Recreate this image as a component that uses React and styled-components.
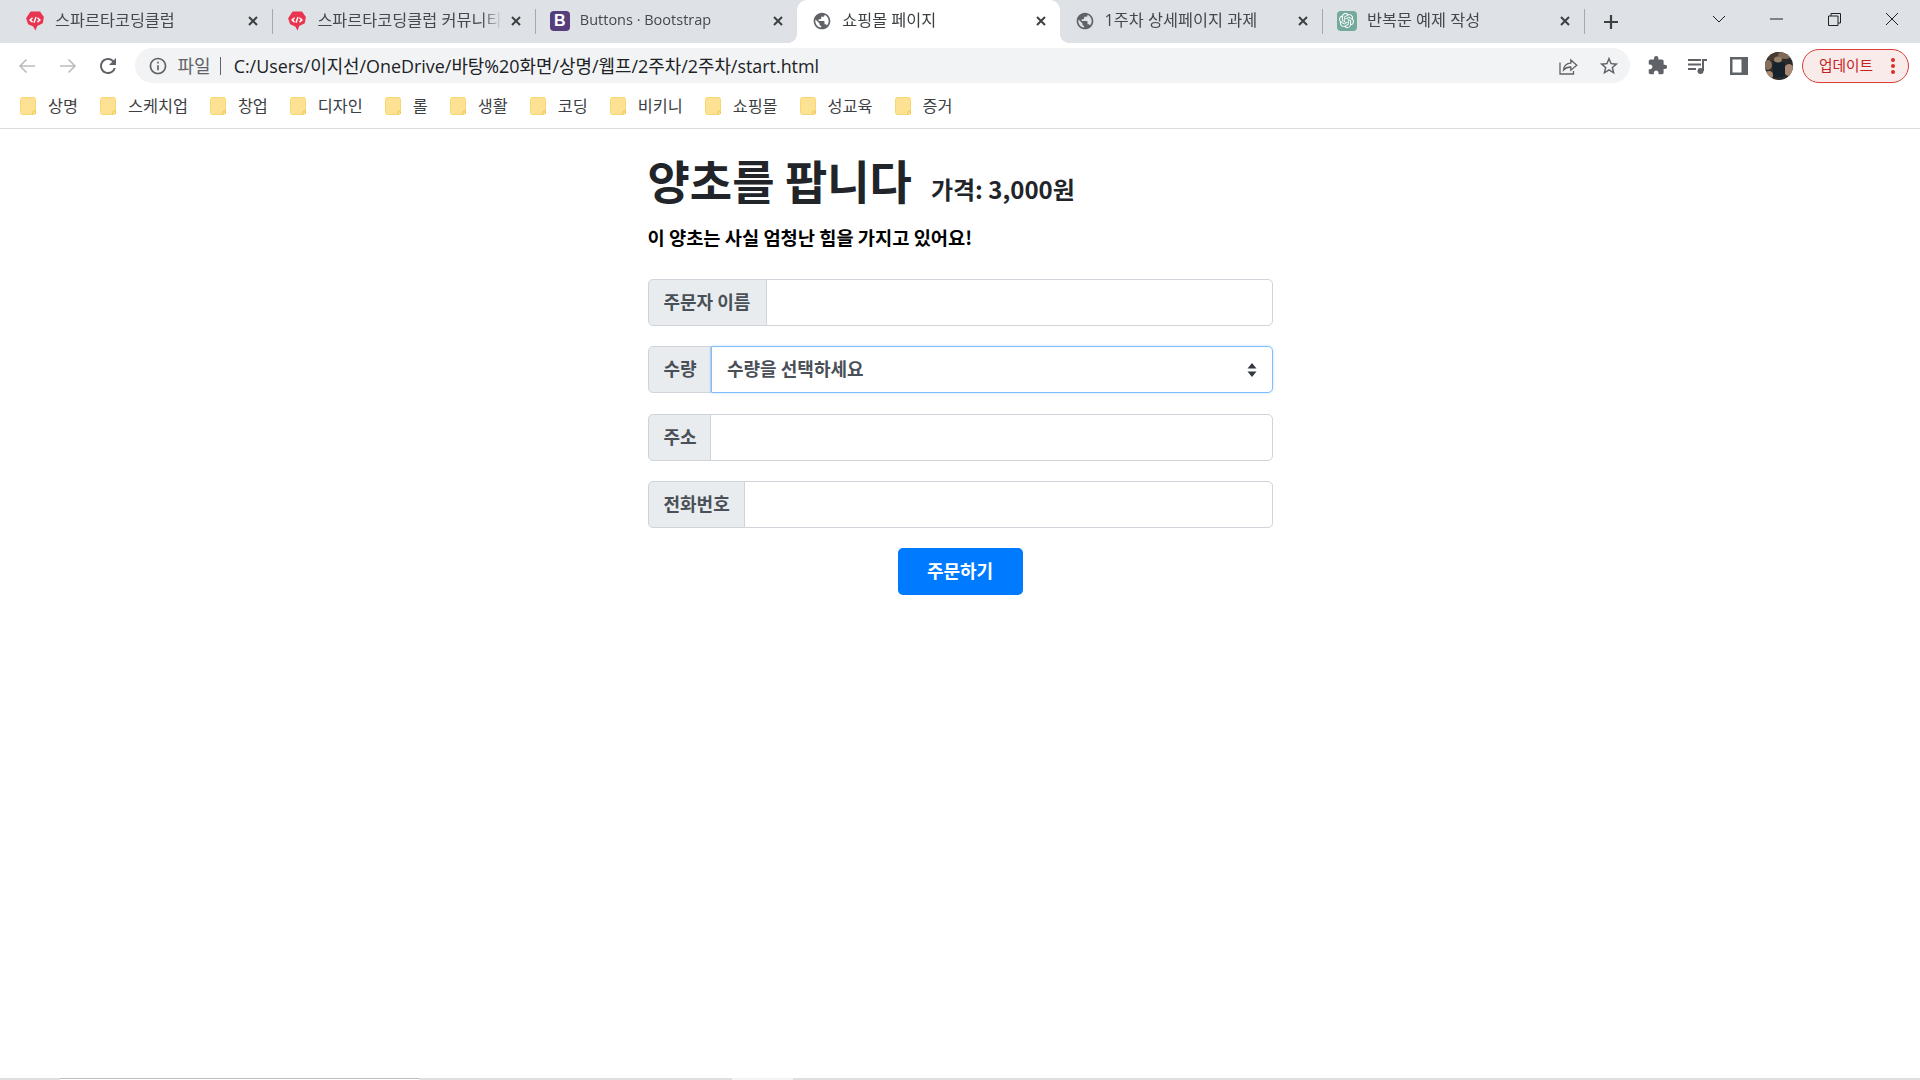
import React from 'react';
import styled, { createGlobalStyle } from 'styled-components';
import { MdExtension, MdInfoOutline, MdPublic, MdRefresh, MdStarBorder } from 'react-icons/md';
import { SiOpenai } from 'react-icons/si';

const GlobalStyle = createGlobalStyle`
  html, body {
    margin: 0;
    padding: 0;
    background: #fff;
  }
  * {
    box-sizing: border-box;
  }
`;

const uiFont = `"Open Sans", "Noto Sans CJK KR", sans-serif`;
const pageFont = `"Noto Sans CJK KR", "Noto Sans", sans-serif`;

const Page = styled.div`
  width: 1920px;
  height: 1080px;
  display: flex;
  flex-direction: column;
  overflow: hidden;
  font-family: ${uiFont};
`;

/* tab strip */
const TabStrip = styled.div`
  height: 43px;
  flex: none;
  display: flex;
  padding-left: 10px;
  background: #dee1e6;
`;

const Tab = styled.div`
  position: relative;
  width: 262.4px;
  height: 43px;
  flex: none;
  display: flex;
  align-items: center;
  padding: 0 13px 2px 15px;
  color: ${(p) => (p.$active ? '#3c4043' : '#45494e')};
  background: ${(p) => (p.$active ? '#fff' : 'transparent')};
  border-radius: 10px 10px 0 0;

  ${(p) =>
    p.$sep &&
    `&::after {
      content: '';
      position: absolute;
      right: -1px;
      top: 9px;
      width: 1px;
      height: 25px;
      background: #a5a8ad;
    }`}

  ${(p) =>
    p.$active &&
    `&::before, &::after {
      content: '';
      position: absolute;
      bottom: 0;
      width: 10px;
      height: 10px;
    }
    &::before {
      left: -10px;
      background: radial-gradient(circle at 0 0, transparent 10px, #fff 10.5px);
    }
    &::after {
      right: -10px;
      background: radial-gradient(circle at 100% 0, transparent 10px, #fff 10.5px);
    }`}
`;

const Favicon = styled.span`
  width: 20px;
  height: 20px;
  flex: none;
  display: flex;
  align-items: center;
  justify-content: center;
  color: #5f6368;
`;

const BootstrapMark = styled.span`
  width: 20px;
  height: 20px;
  display: flex;
  align-items: center;
  justify-content: center;
  border-radius: 4px;
  background: #563d7c;
  color: #fff;
  font-family: "Liberation Sans", sans-serif;
  font-size: 16px;
  font-weight: 700;
`;

const OpenAiMark = styled.span`
  width: 20px;
  height: 20px;
  display: flex;
  align-items: center;
  justify-content: center;
  border-radius: 4px;
  background: #74aa9c;
  color: #fff;
`;

const TabTitle = styled.span`
  flex: 1;
  min-width: 0;
  margin: 0 8px 0 10px;
  padding-bottom: 3px;
  font-size: ${(p) => p.$size || 16.3}px;
  white-space: nowrap;
  overflow: hidden;
  mask-image: linear-gradient(to right, #000 calc(100% - 20px), transparent);
`;

const TabClose = styled.svg`
  width: 12px;
  height: 12px;
  flex: none;
  stroke: #3c4043;
  stroke-width: 2;
`;

const NewTab = styled.svg`
  width: 16px;
  height: 16px;
  margin: 1px 0 0 19px;
  align-self: center;
  stroke: #3c4043;
  stroke-width: 2.2;
`;

const WindowControls = styled.div`
  margin-left: auto;
  display: flex;
  align-items: center;
  height: 38px;
`;

const WindowButton = styled.div`
  width: ${(p) => p.$w}px;
  display: flex;
  justify-content: center;
  color: #202124;
`;

/* toolbar */
const Toolbar = styled.div`
  height: 48px;
  flex: none;
  display: flex;
  align-items: center;
  padding: 0 11px 3px 7px;
  background: #fff;
`;

const IconButton = styled.div`
  width: 40.5px;
  height: 34px;
  flex: none;
  display: flex;
  align-items: center;
  justify-content: center;
  color: ${(p) => (p.$muted ? '#b9bcbf' : '#5f6368')};
`;

const Omnibox = styled.div`
  flex: 1;
  height: 35px;
  margin: 0 8px 0 6px;
  display: flex;
  align-items: center;
  padding: 0 10px 0 13px;
  border-radius: 18px;
  background: #f1f3f4;
`;

const OriginChip = styled.span`
  margin-left: 10px;
  padding-bottom: 2px;
  font-size: 18px;
  color: #5f6368;
`;

const ChipDivider = styled.span`
  width: 1px;
  height: 18px;
  margin: 0 13px 0 9px;
  background: #5f6368;
`;

const Url = styled.span`
  flex: 1;
  padding-bottom: 2px;
  font-size: 17.9px;
  color: #202124;
  white-space: nowrap;
`;

const OmniActions = styled.div`
  display: flex;
  align-items: center;
  gap: 20px;
  color: #5f6368;
`;

const Avatar = styled.svg`
  width: 28px;
  height: 28px;
  flex: none;
  margin-left: 6px;
  border-radius: 50%;
`;

const UpdateButton = styled.div`
  width: 107px;
  height: 34px;
  flex: none;
  margin-left: 9px;
  display: flex;
  align-items: center;
  justify-content: space-between;
  padding: 0 13px 3px 16px;
  border: 1.5px solid #d5403a;
  border-radius: 17px;
  background: #f9ebe9;
  color: #c5221f;
  font-size: 14.7px;
`;

const Dots = styled.svg`
  width: 4px;
  height: 16px;
  margin-top: 3px;
  fill: #d93025;
`;

/* bookmarks */
const BookmarkBar = styled.div`
  height: 38px;
  flex: none;
  display: flex;
  align-items: flex-start;
  padding: 6px 0 0 20px;
  gap: 22px;
  border-bottom: 1px solid #dadce0;
  background: #fff;
`;

const Bookmark = styled.div`
  display: flex;
  align-items: center;
  gap: 12px;
  height: 18px;
  font-size: 16.3px;
  color: #3c4043;
`;

const BookmarkName = styled.span`
  padding-bottom: 3px;
`;

/* page content */
const Main = styled.main`
  flex: 1;
  width: 625px;
  margin: 0 auto;
  padding-top: 20px;
  font-family: ${pageFont};
`;

const Title = styled.h1`
  margin: 0;
  font-size: 46px;
  line-height: 60px;
  font-weight: 700;
  color: #212529;
  white-space: nowrap;
`;

const Price = styled.small`
  margin-left: 19px;
  font-size: 24px;
  font-weight: 700;
`;

const Lead = styled.p`
  margin: 4px 0 0;
  font-size: 18.7px;
  line-height: 28px;
  font-weight: 700;
  color: #000;
`;

const Form = styled.form`
  margin-top: 28px;
  display: flex;
  flex-direction: column;
  gap: 20.3px;
`;

const InputGroup = styled.div`
  position: relative;
  display: flex;
  height: 47px;
`;

const GroupLabel = styled.label`
  width: ${(p) => p.$w}px;
  flex: none;
  display: flex;
  align-items: center;
  padding: 0 0 3px 15px;
  border: 1px solid #ced4da;
  border-radius: 5px 0 0 5px;
  background: #e9ecef;
  color: #495057;
  font-size: 18px;
  font-weight: 700;
  white-space: nowrap;
`;

const TextInput = styled.input`
  flex: 1;
  min-width: 0;
  margin-left: -1px;
  border: 1px solid #ced4da;
  border-radius: 0 5px 5px 0;
  background: #fff;
  outline: none;
`;

const Select = styled.select`
  flex: 1;
  min-width: 0;
  padding: 0 0 4px 15px;
  appearance: none;
  border: 1px solid #80bdff;
  border-radius: 0 5px 5px 0;
  background: #fff;
  box-shadow: 0 0 3px rgba(0, 123, 255, 0.25);
  color: #495057;
  font-family: ${pageFont};
  font-size: 18px;
  font-weight: 700;
  outline: none;
`;

const SelectCaret = styled.svg`
  position: absolute;
  right: 16px;
  top: 17px;
  width: 10px;
  height: 14px;
  fill: #343a40;
  pointer-events: none;
`;

const SubmitRow = styled.div`
  display: flex;
  justify-content: center;
`;

const SubmitButton = styled.button`
  width: 125px;
  height: 47px;
  padding: 0 0 4px;
  border: none;
  border-radius: 5px;
  background: #007bff;
  color: #fff;
  font-family: ${pageFont};
  font-size: 18px;
  font-weight: 700;
`;

/* the sliver of the taskbar peeking in under the window */
const BottomEdge = styled.div`
  height: 2px;
  flex: none;
  display: flex;
  background: #dfdfdf;
`;

const EdgePart = styled.div`
  width: ${(p) => p.$w}px;
  background: ${(p) => p.$bg};
  border-top: ${(p) => (p.$line ? '1px solid #bdbdbd' : 'none')};
`;

function CloseIcon() {
  return (
    <TabClose viewBox="0 0 12 12">
      <path d="M2 2l8 8M10 2l-8 8" />
    </TabClose>
  );
}

function SpartaIcon() {
  return (
    <svg width="20" height="20" viewBox="1.5 1 17 18">
      <path d="M6 1.500h8.500l3.500 5-1 5.500-5 2.500-1.600 4-2-3.600-4.600-2L2 7.500z" fill="#e8344e" />
      <path d="M7.800 7L5.600 9l2.200 2M12.200 7l2.200 2-2.200 2M10.900 6.500L9.100 11.500" fill="none" stroke="#fff" strokeWidth="1.300" />
    </svg>
  );
}

function FolderIcon() {
  return (
    <svg width="16" height="18" viewBox="0 0 16 18">
      <rect x="0.5" y="0.5" width="15" height="17" rx="2" fill="#fde293" stroke="#f7d774" />
      <path d="M13 17.500v-2.700a1.300 1.300 0 0 1 2.500 0v2" fill="#fde293" stroke="#f2c14e" />
    </svg>
  );
}

function ArrowIcon({ flip }) {
  return (
    <svg width="18" height="16" viewBox="0 0 18 16" fill="none" stroke="currentColor" strokeWidth="1.6">
      {flip ? <path d="M1 8h15M9.500 1.500L16 8l-6.500 6.500" /> : <path d="M17 8H2M8.500 1.500L2 8l6.500 6.500" />}
    </svg>
  );
}

function ShareIcon() {
  return (
    <svg width="19" height="18" viewBox="0 0 19 18" fill="none" stroke="currentColor" strokeWidth="1.3">
      <path d="M1 5.500v11.500h13.500v-3" />
      <path d="M4.500 13c.5-4 3.200-6.600 7.300-6.800V3l6 5.200-6 5V10C8.500 10 6.300 11 4.500 13z" />
    </svg>
  );
}

function MediaIcon() {
  return (
    <svg width="20" height="18" viewBox="0 0 20 18" fill="currentColor">
      <rect x="0" y="2" width="13" height="2" />
      <rect x="0" y="6.500" width="13" height="2" />
      <rect x="0" y="11" width="8" height="2" />
      <circle cx="12.500" cy="14" r="3" />
      <rect x="14" y="2" width="2" height="12" />
      <rect x="14" y="2" width="5" height="2" />
    </svg>
  );
}

function SidePanelIcon() {
  return (
    <svg width="18" height="18" viewBox="0 0 18 18">
      <path d="M0 0h18v18H0zM2.500 2.500v13h9v-13z" fill="currentColor" fillRule="evenodd" />
    </svg>
  );
}

function AvatarImage() {
  return (
    <Avatar viewBox="0 0 28 28">
      <rect width="28" height="28" fill="#2b2a2a" />
      <ellipse cx="10" cy="4" rx="9" ry="5" fill="#4a3b30" />
      <ellipse cx="20" cy="3" rx="7" ry="4" fill="#7d6a58" />
      <ellipse cx="3" cy="13" rx="4" ry="5" fill="#8a6f5a" />
      <ellipse cx="24" cy="18" rx="5" ry="6" fill="#a98a74" />
      <ellipse cx="4" cy="23" rx="4" ry="4" fill="#b08a6e" />
      <rect x="8" y="10" width="12" height="15" rx="3" fill="#16222c" />
      <ellipse cx="13" cy="7.500" rx="4" ry="3" fill="#97806c" />
    </Avatar>
  );
}

const tabs = [
  { title: '스파르타코딩클럽', icon: <SpartaIcon />, sep: true },
  { title: '스파르타코딩클럽 커뮤니티', icon: <SpartaIcon />, sep: true },
  { title: 'Buttons · Bootstrap', icon: <BootstrapMark>B</BootstrapMark>, size: 14.5 },
  { title: '쇼핑몰 페이지', icon: <MdPublic size={22} />, active: true },
  { title: '1주차 상세페이지 과제', icon: <MdPublic size={22} />, sep: true },
  { title: '반복문 예제 작성', icon: <OpenAiMark><SiOpenai size={15} /></OpenAiMark>, sep: true },
];

const bookmarks = ['상명', '스케치업', '창업', '디자인', '롤', '생활', '코딩', '비키니', '쇼핑몰', '성교육', '증거'];

function App() {
  return (
    <Page>
      <GlobalStyle />
      <TabStrip>
        {tabs.map((tab) => (
          <Tab key={tab.title} $active={tab.active} $sep={tab.sep}>
            <Favicon>{tab.icon}</Favicon>
            <TabTitle $size={tab.size}>{tab.title}</TabTitle>
            <CloseIcon />
          </Tab>
        ))}
        <NewTab viewBox="0 0 16 16">
          <path d="M8 1v14M1 8h14" />
        </NewTab>
        <WindowControls>
          <WindowButton $w={58}>
            <svg width="14" height="8" viewBox="0 0 14 8" fill="none" stroke="currentColor">
              <path d="M1 1l6 6 6-6" />
            </svg>
          </WindowButton>
          <WindowButton $w={57}>
            <svg width="13" height="2" viewBox="0 0 13 2" stroke="currentColor">
              <path d="M0 1h13" />
            </svg>
          </WindowButton>
          <WindowButton $w={58}>
            <svg width="13" height="13" viewBox="0 0 13 13" fill="none" stroke="currentColor">
              <path d="M0.500 3h9.500v9.500H0.500zM3 3V0.500h9.500V10H10" />
            </svg>
          </WindowButton>
          <WindowButton $w={57}>
            <svg width="14" height="14" viewBox="0 0 14 14" stroke="currentColor">
              <path d="M1 1l12 12M13 1L1 13" />
            </svg>
          </WindowButton>
        </WindowControls>
      </TabStrip>

      <Toolbar>
        <IconButton $muted><ArrowIcon /></IconButton>
        <IconButton $muted><ArrowIcon flip /></IconButton>
        <IconButton><MdRefresh size={24} /></IconButton>
        <Omnibox>
          <MdInfoOutline size={20} color="#5f6368" />
          <OriginChip>파일</OriginChip>
          <ChipDivider />
          <Url>C:/Users/이지선/OneDrive/바탕%20화면/상명/웹프/2주차/2주차/start.html</Url>
          <OmniActions>
            <ShareIcon />
            <MdStarBorder size={22} />
          </OmniActions>
        </Omnibox>
        <IconButton><MdExtension size={21} /></IconButton>
        <IconButton><MediaIcon /></IconButton>
        <IconButton><SidePanelIcon /></IconButton>
        <AvatarImage />
        <UpdateButton>
          업데이트
          <Dots viewBox="0 0 4 16">
            <circle cx="2" cy="2" r="2" />
            <circle cx="2" cy="8" r="2" />
            <circle cx="2" cy="14" r="2" />
          </Dots>
        </UpdateButton>
      </Toolbar>

      <BookmarkBar>
        {bookmarks.map((name) => (
          <Bookmark key={name}>
            <FolderIcon />
            <BookmarkName>{name}</BookmarkName>
          </Bookmark>
        ))}
      </BookmarkBar>

      <Main>
        <Title>
          양초를 팝니다<Price>가격: 3,000원</Price>
        </Title>
        <Lead>이 양초는 사실 엄청난 힘을 가지고 있어요!</Lead>
        <Form>
          <InputGroup>
            <GroupLabel $w={119}>주문자 이름</GroupLabel>
            <TextInput />
          </InputGroup>
          <InputGroup>
            <GroupLabel $w={63.5}>수량</GroupLabel>
            <Select defaultValue="">
              <option value="">수량을 선택하세요</option>
            </Select>
            <SelectCaret viewBox="0 0 10 14">
              <path d="M5 0l4.500 5.500h-9zM5 14l4.500-5.500h-9z" />
            </SelectCaret>
          </InputGroup>
          <InputGroup>
            <GroupLabel $w={63}>주소</GroupLabel>
            <TextInput />
          </InputGroup>
          <InputGroup>
            <GroupLabel $w={97}>전화번호</GroupLabel>
            <TextInput />
          </InputGroup>
          <SubmitRow>
            <SubmitButton type="button">주문하기</SubmitButton>
          </SubmitRow>
        </Form>
      </Main>

      <BottomEdge>
        <EdgePart $w={60} $bg="#dfdfdf" />
        <EdgePart $w={359} $bg="#fff" $line />
        <EdgePart $w={313} $bg="#dfdfdf" />
        <EdgePart $w={61} $bg="#f4f4f4" />
      </BottomEdge>
    </Page>
  );
}

export default App;
